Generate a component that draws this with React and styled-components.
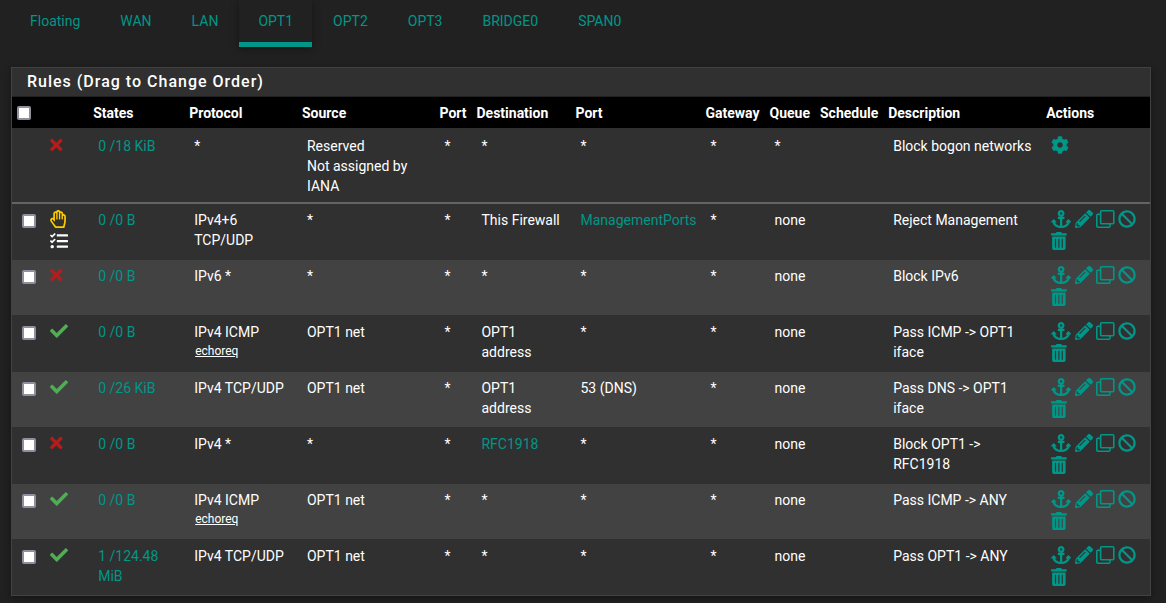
import React from 'react';
import styled, { createGlobalStyle } from 'styled-components';
import {
  FaTimes, FaRegHandPaper, FaTasks, FaCheck, FaAnchor, FaPencilAlt, FaBan, FaTrashAlt, FaCog,
} from 'react-icons/fa';

const teal = '#009688';

const GlobalStyle = createGlobalStyle`
  * { box-sizing: border-box; }
  body {
    margin: 0;
    background: #212121;
    color: #fff;
    font: 400 14px/20px Roboto, sans-serif;
    overflow: hidden;
  }
`;

const Page = styled.main`
  height: 603px;
  padding: 0 15px 0 11px;
  overflow: hidden;
`;

const Tabs = styled.nav`
  display: flex;
  gap: 2px;
  height: 47px;
  margin-bottom: 20px;
`;

const Tab = styled.a`
  padding: 11px 19px 0;
  color: ${teal};
  border-bottom: 5px solid ${(p) => (p.$active ? teal : 'transparent')};
  box-shadow: ${(p) => (p.$active ? '0 2px 8px rgba(0, 0, 0, 0.4)' : 'none')};
`;

const Panel = styled.section`
  border: 1px solid #424242;
  background: #303030;
  box-shadow: 0 2px 8px rgba(0, 0, 0, 0.4);
`;

const PanelTitle = styled.h2`
  margin: 0;
  height: 29px;
  padding: 4px 15px 0;
  font-size: 16px;
  font-weight: 500;
  letter-spacing: 1px;
  border-bottom: 1px solid #212121;
`;

const Row = styled.div`
  display: grid;
  grid-template-columns: 28px 48.2px 96px 112.8px 137.5px 37px 99px 130px 64px 50.5px 68.2px 158px 1fr;
  padding-left: 5px;
`;

const HeadRow = styled(Row)`
  height: 31px;
  padding-top: 6px;
  background: #000;
  font-weight: 700;
`;

const BodyRow = styled(Row)`
  height: ${(p) => (p.$system ? 76 : 56)}px;
  padding-top: ${(p) => (p.$system ? 8 : 6)}px;
  background: ${(p) => (p.$light ? '#424242' : '#303030')};
  border-bottom: ${(p) => (p.$system ? '2px solid #646464' : '1px solid #303030')};
  &:last-child { height: 55px; border-bottom: 0; }
`;

const HeadCell = styled.div`
  white-space: nowrap;
`;

const Cell = styled.div`
  padding-left: 5px;
  white-space: pre;
  color: ${(p) => (p.$link ? teal : '#fff')};
`;

const Check = styled.input.attrs({ type: 'checkbox' })`
  appearance: none;
  display: block;
  width: 14px;
  height: 14px;
  margin: ${(p) => (p.$head ? '3px 0 0' : '4px 0 0')};
  border: 2px solid #8f8f9d;
  border-radius: 2px;
  background: #fff;
`;

const Small = styled.u`
  display: block;
  padding-left: 1px;
  font-size: 12px;
  line-height: 18px;
`;

const Status = styled.div`
  display: flex;
  flex-direction: column;
  align-items: flex-start;
  gap: 4px;
  padding: 0.4px 0 0 5px;
`;

const Actions = styled.div`
  display: flex;
  flex-wrap: wrap;
  align-content: flex-start;
  gap: 4px 3.4px;
  padding: 0.4px 0 0 5px;
  color: ${teal};
`;

const Glyph = styled.svg`
  display: block;
  flex: none;
  width: ${(p) => p.$width || 18}px;
  height: 18px;
  color: ${(p) => p.$color || 'inherit'};
`;

function CloneIcon() {
  return (
    <Glyph $width={18.6} viewBox="0 0 18.6 18" fill="none" stroke="currentColor" strokeWidth="1.6">
      <rect x="4.6" y="0.8" width="13.2" height="12.9" rx="1" />
      <path d="M4.6 4.3H1.8Q0.8 4.3 0.8 5.3V16.2Q0.8 17.2 1.8 17.2H13Q14 17.2 14 16.2V13.7" />
    </Glyph>
  );
}

const headings = ['States', 'Protocol', 'Source', 'Port', 'Destination', 'Port', 'Gateway', 'Queue', 'Schedule', 'Description', 'Actions'];

const rules = [
  { system: true, action: 'block', states: '0 /18 KiB', proto: '*', source: 'Reserved\nNot assigned by\nIANA', dest: '*', port: '*', queue: '*', text: 'Block bogon networks' },
  { action: 'reject', advanced: true, states: '0 /0 B', proto: 'IPv4+6\nTCP/UDP', source: '*', dest: 'This Firewall', port: 'ManagementPorts', portAlias: true, text: 'Reject Management' },
  { action: 'block', states: '0 /0 B', proto: 'IPv6 *', source: '*', dest: '*', port: '*', text: 'Block IPv6' },
  { action: 'pass', states: '0 /0 B', proto: 'IPv4 ICMP', sub: 'echoreq', source: 'OPT1 net', dest: 'OPT1\naddress', port: '*', text: 'Pass ICMP -> OPT1\niface' },
  { action: 'pass', states: '0 /26 KiB', proto: 'IPv4 TCP/UDP', source: 'OPT1 net', dest: 'OPT1\naddress', port: '53 (DNS)', text: 'Pass DNS -> OPT1\niface' },
  { action: 'block', states: '0 /0 B', proto: 'IPv4 *', source: '*', dest: 'RFC1918', destAlias: true, port: '*', text: 'Block OPT1 ->\nRFC1918' },
  { action: 'pass', states: '0 /0 B', proto: 'IPv4 ICMP', sub: 'echoreq', source: 'OPT1 net', dest: '*', port: '*', text: 'Pass ICMP -> ANY' },
  { action: 'pass', states: '1 /124.48\nMiB', proto: 'IPv4 TCP/UDP', source: 'OPT1 net', dest: '*', port: '*', text: 'Pass OPT1 -> ANY' },
];

const statusIcons = {
  block: <Glyph as={FaTimes} $width={12.6} $color="#b71c1c" />,
  reject: <Glyph as={FaRegHandPaper} $width={16} $color="#fc0" />,
  pass: <Glyph as={FaCheck} $color="#4caf50" />,
};

function Rule({ rule, light }) {
  return (
    <BodyRow $system={rule.system} $light={light}>
      <Cell>{!rule.system && <Check />}</Cell>
      <Status>
        {statusIcons[rule.action]}
        {rule.advanced && <Glyph as={FaTasks} />}
      </Status>
      <Cell $link>{rule.states}</Cell>
      <Cell>
        {rule.proto}
        {rule.sub && <Small>{rule.sub}</Small>}
      </Cell>
      <Cell>{rule.source}</Cell>
      <Cell>*</Cell>
      <Cell $link={rule.destAlias}>{rule.dest}</Cell>
      <Cell $link={rule.portAlias}>{rule.port}</Cell>
      <Cell>*</Cell>
      <Cell>{rule.queue || 'none'}</Cell>
      <Cell />
      <Cell>{rule.text}</Cell>
      <Actions>
        {rule.system ? <Glyph as={FaCog} /> : (
          <>
            <Glyph as={FaAnchor} $width={20.25} />
            <Glyph as={FaPencilAlt} />
            <CloneIcon />
            <Glyph as={FaBan} />
            <Glyph as={FaTrashAlt} $width={15.75} />
          </>
        )}
      </Actions>
    </BodyRow>
  );
}

export default function App() {
  return (
    <Page>
      <GlobalStyle />
      <Tabs>
        {['Floating', 'WAN', 'LAN', 'OPT1', 'OPT2', 'OPT3', 'BRIDGE0', 'SPAN0'].map((name) => (
          <Tab key={name} $active={name === 'OPT1'}>{name}</Tab>
        ))}
      </Tabs>
      <Panel>
        <PanelTitle>Rules (Drag to Change Order)</PanelTitle>
        <HeadRow>
          <Check $head />
          <HeadCell />
          {headings.map((name, i) => <HeadCell key={i}>{name}</HeadCell>)}
        </HeadRow>
        <div>
          {rules.map((rule, i) => <Rule key={i} rule={rule} light={i > 0 && i % 2 === 0} />)}
        </div>
      </Panel>
    </Page>
  );
}
